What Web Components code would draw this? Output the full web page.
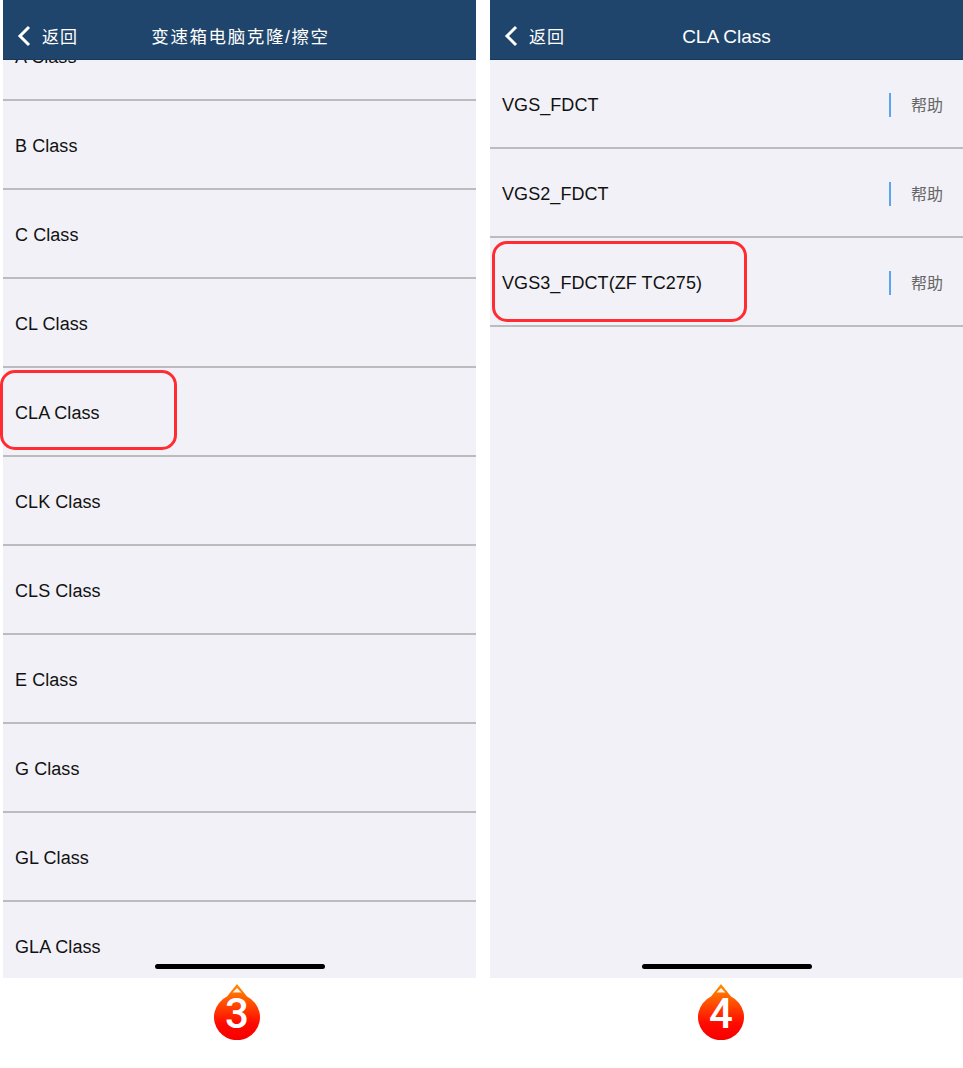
<!DOCTYPE html>
<html>
<head>
<meta charset="utf-8">
<style>
  html, body { margin: 0; background: #fff; }
  body { width: 963px; height: 1068px; overflow: hidden; font-family: "Liberation Sans", "Noto Sans CJK SC", sans-serif; }
  .screens { display: grid; grid-template-columns: 473px 473px; gap: 14px; padding-left: 3px; }
</style>
</head>
<body>
<div class="screens">
  <step-screen heading="变速箱电脑克隆/擦空" spaced offset="-48" step="3" shift="5">
    <list-row>A Class</list-row>
    <list-row>B Class</list-row>
    <list-row>C Class</list-row>
    <list-row>CL Class</list-row>
    <list-row mark="177">CLA Class</list-row>
    <list-row>CLK Class</list-row>
    <list-row>CLS Class</list-row>
    <list-row>E Class</list-row>
    <list-row>G Class</list-row>
    <list-row>GL Class</list-row>
    <list-row>GLA Class</list-row>
  </step-screen>
  <step-screen heading="CLA Class" offset="0" step="4" shift="11">
    <list-row help>VGS_FDCT</list-row>
    <list-row help>VGS2_FDCT</list-row>
    <list-row help mark="255" inset>VGS3_FDCT(ZF TC275)</list-row>
  </step-screen>
</div>

<script>
const screenTpl = document.createElement("template");
screenTpl.innerHTML = `
  <style>
    :host { display: block; }
    .phone { height: 978px; background: #f1f1f7; position: relative; clip-path: inset(0 0 0 -3px); display: flex; flex-direction: column; }
    header { flex: none; height: 60px; box-sizing: border-box; padding-top: 12px; background: #1f456c; border-bottom: 1px solid #17395c; color: #fff; display: grid; grid-template-columns: 1fr auto 1fr; align-items: center; position: relative; z-index: 1; }
    .back { display: flex; align-items: center; gap: 11px; padding-left: 14px; font-size: 17px; letter-spacing: 1px; }
    .back svg { display: block; }
    .title { font-size: 19px; white-space: nowrap; margin-top: 2px; }
    :host([spaced]) .title { font-size: 17.5px; letter-spacing: 1.6px; margin: 0 0 0 2px; }
    .list { flex: 1; min-height: 0; }
    .bar { position: absolute; left: 152px; bottom: 9px; width: 170px; height: 5px; border-radius: 3px; background: #000; }
    .foot { height: 90px; display: flex; justify-content: center; padding-top: 6px; box-sizing: border-box; }
    .drop { width: 48px; height: 56px; position: relative; }
    .drop svg { position: absolute; inset: 0; }
    .num { position: absolute; left: 0; right: 0; top: 8px; text-align: center; color: #fff; font: 500 42px/44px Roboto, sans-serif; }
  </style>
  <div class="phone">
    <header>
      <div class="back">
        <svg width="14" height="22" viewBox="0 0 14 22"><path d="M12 2 3 11l9 9" fill="none" stroke="#fff" stroke-width="3"/></svg>
        <span>返回</span>
      </div>
      <div class="title"></div>
      <div></div>
    </header>
    <div class="list"><slot></slot></div>
    <div class="bar"></div>
  </div>
  <div class="foot">
    <div class="drop">
      <svg width="48" height="56" viewBox="0 0 48 56">
        <defs><linearGradient id="g" x1="0" y1="0" x2="0" y2="1">
          <stop offset="0" stop-color="#ff9000"/><stop offset=".7" stop-color="#ff0a00"/><stop offset="1" stop-color="#f50000"/>
        </linearGradient></defs>
        <path d="M24 0 34 12.5A23 23 0 1 1 14 12.5Z" fill="url(#g)"/>
        <path d="M24 4 28.5 8.5H19.5Z" fill="#fff" opacity=".9"/>
      </svg>
      <div class="num"></div>
    </div>
  </div>
`;

class StepScreen extends HTMLElement {
  constructor() {
    super();
    this.attachShadow({ mode: "open" });
    this.shadowRoot.appendChild(screenTpl.content.cloneNode(true));
  }

  connectedCallback() {
    this.shadowRoot.querySelector(".title").textContent = this.getAttribute("heading");
    this.shadowRoot.querySelector(".num").textContent = this.getAttribute("step");
    // the left list is scrolled a bit, first row sits under the header
    this.shadowRoot.querySelector(".list").style.marginTop = this.getAttribute("offset") + "px";
    this.shadowRoot.querySelector(".drop").style.marginRight = this.getAttribute("shift") + "px";
  }
}

const rowTpl = document.createElement("template");
rowTpl.innerHTML = `
  <style>
    :host { display: block; }
    .row { height: 89px; box-sizing: border-box; border-bottom: 2px solid #bcbcbe; display: flex; align-items: center; padding: 4px 20px 0 12px; color: #111; font-size: 18px; letter-spacing: .07px; position: relative; }
    .label { flex: 1; }
    .help { display: none; border-left: 2px solid #5aa6ee; height: 24px; width: 32px; margin-top: -1px; padding-left: 20px; font-size: 16px; letter-spacing: 0; line-height: 26px; color: #666; white-space: nowrap; }
    :host([help]) .help { display: block; }
    .mark { display: none; position: absolute; top: 2px; left: -3px; height: 80px; box-sizing: border-box; border: 3.5px solid #ff2d33; border-radius: 15px; }
    :host([mark]) .mark { display: block; }
    :host([inset]) .mark { left: 2px; top: 3px; height: 81px; }
  </style>
  <div class="row">
    <span class="label"><slot></slot></span>
    <span class="help">帮助</span>
    <div class="mark"></div>
  </div>
`;

class ListRow extends HTMLElement {
  constructor() {
    super();
    this.attachShadow({ mode: "open" });
    this.shadowRoot.appendChild(rowTpl.content.cloneNode(true));
  }

  connectedCallback() {
    if (this.hasAttribute("mark")) {
      this.shadowRoot.querySelector(".mark").style.width = this.getAttribute("mark") + "px";
    }
  }
}

customElements.define("step-screen", StepScreen);
customElements.define("list-row", ListRow);
</script>
</body>
</html>
